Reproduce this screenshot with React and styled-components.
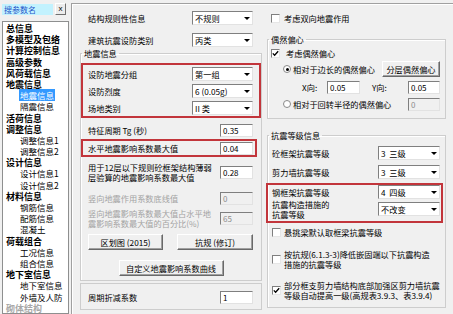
import styled, { createGlobalStyle } from "styled-components";

const GlobalStyle = createGlobalStyle`
  html, body {
    margin: 0;
    padding: 0;
    background: #f0f0f0;
  }
  body {
    font-family: "Noto Sans CJK SC", "Liberation Sans", sans-serif;
    font-size: 8.2px;
    color: #000;
  }
`;

const Window = styled.div`
  display: flex;
  width: 453px;
  height: 314px;
  overflow: hidden;
  background: #f0f0f0;
`;

// ------------------------------------------- 左侧目录

const Sidebar = styled.div`
  width: 67px;
  flex: none;
  padding-left: 2px;
  display: flex;
  flex-direction: column;
`;

const SearchRow = styled.div`
  display: flex;
  align-items: flex-start;
  gap: 2px;
  padding-top: 3px;
  height: 12px;
`;

const SearchBox = styled.div`
  margin-top: 1px;
  width: 51px;
  height: 11px;
  box-sizing: border-box;
  padding-left: 2px;
  background: #c2f2fe;
  color: #1f55c9;
  font-size: 8px;
  line-height: 11px;
  white-space: nowrap;
`;

const CloseButton = styled.div`
  width: 11px;
  height: 12px;
  box-sizing: border-box;
  border: 1px solid;
  border-color: #fff #707070 #707070 #fff;
  background: #ececec;
  font-family: "Liberation Sans", sans-serif;
  font-size: 8px;
  line-height: 9px;
  text-align: center;
`;

const ListBox = styled.div`
  margin-top: 6px;
  flex: 1;
  box-sizing: border-box;
  border: 1px solid #8e8f8f;
  background: #fff;
  padding-top: 1px;
  overflow: hidden;
`;

const TreeItem = styled.div`
  height: 11.2px;
  line-height: 11.2px;
  padding-left: ${(p) => (p.$sub ? 17 : 3)}px;
  font-size: ${(p) => (p.$sub ? 8.5 : 9)}px;
  font-weight: ${(p) => (p.$sub ? 400 : 700)};
  color: ${(p) => (p.$disabled ? "#a8a8a8" : "#000")};
  white-space: nowrap;
`;

const Highlight = styled.span`
  background: ${(p) => (p.$on ? "#3399ff" : "transparent")};
  color: ${(p) => (p.$on ? "#fff" : "inherit")};
  padding: 0 1px;
  margin-left: -1px;
`;

// ------------------------------------------- 右侧参数页

const Panel = styled.div`
  flex: 1;
  margin: 3px 0 0 2px;
  border-top: 1px solid #a0a0a0;
  border-left: 1px solid #a0a0a0;
  box-shadow: inset 1px 1px 0 #fff;
  padding: 5px 0 0 8px;
  display: grid;
  grid-template-columns: 182px 179px;
  column-gap: 5px;
  align-items: start;
`;

const Column = styled.div`
  display: flex;
  flex-direction: column;
`;

const Group = styled.fieldset`
  margin: ${(p) => p.$mt || 0}px 0 0 0;
  padding: 0 0 ${(p) => p.$pb || 0}px 0;
  min-width: 0;
  border: 1px solid #cdcdcd;
  box-shadow: inset 1px 1px 0 #fff;
`;

const Legend = styled.legend`
  padding: 0 2px;
  margin-left: 1px;
  line-height: 10px;
  font-size: 8.2px;
`;

const Box = styled.div`
  margin-top: ${(p) => p.$mt || 0}px;
  border: 1px solid #cdcdcd;
  padding: 4px 0 3px;
`;

const RedBox = styled.div`
  margin: ${(p) => p.$m};
  border: 2px solid #c2353b;
  padding-bottom: ${(p) => p.$pb || 0}px;
`;

const Row = styled.div`
  display: flex;
  align-items: center;
  height: ${(p) => p.$h}px;
  margin-top: ${(p) => p.$mt || 0}px;
  padding: 0 ${(p) => p.$pr || 0}px 0 ${(p) => p.$pl || 0}px;
  gap: ${(p) => p.$gap || 0}px;
  justify-content: ${(p) => (p.$center ? "center" : "flex-start")};
`;

const Label = styled.div`
  line-height: 10px;
  white-space: nowrap;
  color: ${(p) => (p.$disabled ? "#a3a3a3" : "#000")};
  width: ${(p) => (p.$w ? `${p.$w}px` : "auto")};
  flex: none;
`;

const Field = styled.div`
  width: ${(p) => p.$w}px;
  height: 13px;
  box-sizing: border-box;
  margin-left: ${(p) => (p.$fixed ? 0 : "auto")};
  border: 1px solid;
  border-color: #7f7f7f #e2e2e2 #e2e2e2 #7f7f7f;
  background: ${(p) => (p.$disabled ? "#f0f0f0" : "#fff")};
  color: ${(p) => (p.$disabled ? "#8c8c8c" : "#000")};
  padding-left: 2px;
  line-height: 11px;
  font-size: 8px;
  white-space: nowrap;
  flex: none;
`;

const Select = styled.div`
  width: ${(p) => p.$w}px;
  height: 14px;
  box-sizing: border-box;
  margin-left: auto;
  border: 1px solid;
  border-color: #7f7f7f #e2e2e2 #e2e2e2 #7f7f7f;
  background: #fff;
  display: flex;
  align-items: center;
  flex: none;
`;

const SelectText = styled.span`
  flex: 1;
  padding-left: 2px;
  line-height: 12px;
  white-space: pre;
`;

const Arrow = styled.span`
  width: 11px;
  height: 100%;
  display: flex;
  align-items: center;
  justify-content: center;
  &::after {
    content: "";
    border-left: 3px solid transparent;
    border-right: 3px solid transparent;
    border-top: 3px solid #000;
    margin-top: 1px;
  }
`;

const Button = styled.button`
  width: ${(p) => p.$w}px;
  height: 16px;
  box-sizing: border-box;
  margin: 0 0 0 ${(p) => (p.$auto ? "auto" : "0")};
  padding: 0;
  border: 1px solid;
  border-color: #fff #696969 #696969 #fff;
  box-shadow: inset -1px -1px 0 #a0a0a0;
  background: #f0f0f0;
  font: inherit;
  line-height: 10px;
  color: #000;
  flex: none;
`;

const CheckBox = styled.span`
  width: 9px;
  height: 9px;
  box-sizing: border-box;
  border: 1px solid;
  border-color: #7f7f7f #e6e6e6 #e6e6e6 #7f7f7f;
  background: #fff;
  display: flex;
  align-items: center;
  justify-content: center;
  flex: none;
`;

const Radio = styled.span`
  width: 8px;
  height: 8px;
  box-sizing: border-box;
  border: 1px solid #8a8a8a;
  border-radius: 50%;
  background: #fff;
  display: flex;
  align-items: center;
  justify-content: center;
  flex: none;
  &::after {
    content: "";
    width: 3px;
    height: 3px;
    border-radius: 50%;
    background: ${(p) => (p.$on ? "#000" : "transparent")};
  }
`;

function Check({ on }) {
  return (
    <CheckBox>
      {on ? (
        <svg width="7" height="7" viewBox="0 0 7 7">
          <path d="M0.8 3.4 L2.6 5.3 L6.2 1.2" fill="none" stroke="#000" strokeWidth="1.3" />
        </svg>
      ) : null}
    </CheckBox>
  );
}

function Drop({ w, children }) {
  return (
    <Select $w={w}>
      <SelectText>{children}</SelectText>
      <Arrow />
    </Select>
  );
}

const tree = [
  { t: "总信息" },
  { t: "多模型及包络" },
  { t: "计算控制信息" },
  { t: "高级参数" },
  { t: "风荷载信息" },
  { t: "地震信息" },
  { t: "地震信息", sub: true, sel: true },
  { t: "隔震信息", sub: true },
  { t: "活荷信息" },
  { t: "调整信息" },
  { t: "调整信息1", sub: true },
  { t: "调整信息2", sub: true },
  { t: "设计信息" },
  { t: "设计信息1", sub: true },
  { t: "设计信息2", sub: true },
  { t: "材料信息" },
  { t: "钢筋信息", sub: true },
  { t: "配筋信息", sub: true },
  { t: "混凝土", sub: true },
  { t: "荷载组合" },
  { t: "工况信息", sub: true },
  { t: "组合信息", sub: true },
  { t: "地下室信息" },
  { t: "地下室信息", sub: true },
  { t: "外墙及人防", sub: true },
  { t: "砌体结构", dis: true },
];

export default function App() {
  return (
    <>
      <GlobalStyle />
      <Window>
        <Sidebar>
          <SearchRow>
            <SearchBox>搜参数名</SearchBox>
            <CloseButton>x</CloseButton>
          </SearchRow>
          <ListBox>
            {tree.map((item, i) => (
              <TreeItem key={i} $sub={item.sub} $disabled={item.dis}>
                <Highlight $on={item.sel}>{item.t}</Highlight>
              </TreeItem>
            ))}
          </ListBox>
        </Sidebar>

        <Panel>
          <Column>
            <Row $h={18} $pl={8} $pr={9}>
              <Label>结构规则性信息</Label>
              <Drop w={61}>不规则</Drop>
            </Row>
            <Row $h={18} $mt={4} $pl={8} $pr={9}>
              <Label>建筑抗震设防类别</Label>
              <Drop w={61}>丙类</Drop>
            </Row>

            <Group $mt={-1} $pb={4}>
              <Legend>地震信息</Legend>
              <RedBox $m="5px 0 0 0">
                <Row $h={17} $pl={5} $pr={6}>
                  <Label>设防地震分组</Label>
                  <Drop w={61}>第一组</Drop>
                </Row>
                <Row $h={17} $pl={5} $pr={6}>
                  <Label>设防烈度</Label>
                  <Drop w={61}>6 (0.05g)</Drop>
                </Row>
                <Row $h={17} $pl={5} $pr={6}>
                  <Label>场地类别</Label>
                  <Drop w={61}>II 类</Drop>
                </Row>
              </RedBox>
              <Row $h={18} $mt={3} $pl={7} $pr={8}>
                <Label>特征周期 Tg (秒)</Label>
                <Field $w={33}>0.35</Field>
              </Row>
              <RedBox $m="0 4px 0 0">
                <Row $h={14} $pl={5} $pr={2}>
                  <Label>水平地震影响系数最大值</Label>
                  <Field $w={33}>0.04</Field>
                </Row>
              </RedBox>
              <Row $h={24} $mt={3} $pl={7} $pr={8}>
                <Label>
                  用于12层以下规则砼框架结构薄弱
                  <br />
                  层验算的地震影响系数最大值
                </Label>
                <Field $w={33}>0.28</Field>
              </Row>
              <Row $h={18} $mt={5} $pl={7} $pr={8}>
                <Label $disabled>竖向地震作用系数底线值</Label>
                <Field $w={33} $disabled>0</Field>
              </Row>
              <Row $h={22} $pl={7} $pr={8}>
                <Label $disabled>
                  竖向地震影响系数最大值占水平地
                  <br />
                  震影响系数最大值的百分比(%)
                </Label>
                <Field $w={33} $disabled>65</Field>
              </Row>
              <Row $h={16} $mt={5} $pl={7} $gap={14}>
                <Button $w={75}>区划图 (2015)</Button>
                <Button $w={76}>抗规 (修订)</Button>
              </Row>
              <Row $h={16} $mt={10} $center>
                <Button $w={105}>自定义地震影响系数曲线</Button>
              </Row>
            </Group>

            <Box $mt={2}>
              <Row $h={18} $pl={7} $pr={8}>
                <Label>周期折减系数</Label>
                <Field $w={33}>1</Field>
              </Row>
            </Box>
          </Column>

          <Column>
            <Row $h={18} $pl={4} $gap={4}>
              <Check />
              <Label>考虑双向地震作用</Label>
            </Row>

            <Group $mt={7} $pb={6}>
              <Legend>偶然偏心</Legend>
              <Row $h={16} $mt={1} $pl={3} $gap={6}>
                <Check on />
                <Label>考虑偶然偏心</Label>
              </Row>
              <Row $h={16} $pl={15} $pr={5} $gap={2}>
                <Radio $on />
                <Label>相对于边长的偶然偏心</Label>
                <Button $w={58} $auto>分层偶然偏心</Button>
              </Row>
              <Row $h={16} $mt={2} $pl={34} $pr={5}>
                <Label $w={25}>X向:</Label>
                <Field $w={33} $fixed>0.05</Field>
                <Label $w={36} style={{ marginLeft: 12 }}>Y向:</Label>
                <Field $w={32}>0.05</Field>
              </Row>
              <Row $h={16} $mt={1} $pl={15} $pr={5} $gap={2}>
                <Radio />
                <Label>相对于回转半径的偶然偏心</Label>
                <Field $w={32} $disabled>0</Field>
              </Row>
            </Group>

            <Group $mt={11} $pb={6}>
              <Legend>抗震等级信息</Legend>
              <Row $h={16} $mt={5} $pl={4} $pr={5}>
                <Label>砼框架抗震等级</Label>
                <Drop w={62}>{"3  三级"}</Drop>
              </Row>
              <Row $h={16} $mt={3} $pl={4} $pr={5}>
                <Label>剪力墙抗震等级</Label>
                <Drop w={62}>{"3  三级"}</Drop>
              </Row>
              <RedBox $m="3px 2px 0 -2px" $pb={2}>
                <Row $h={14} $pl={4} $pr={1}>
                  <Label>钢框架抗震等级</Label>
                  <Drop w={62}>{"4  四级"}</Drop>
                </Row>
                <Row $h={20} $pl={4} $pr={1}>
                  <Label>
                    抗震构造措施的
                    <br />
                    抗震等级
                  </Label>
                  <Drop w={62}>不改变</Drop>
                </Row>
              </RedBox>
              <Row $h={16} $mt={1} $pl={4} $gap={3}>
                <Check />
                <Label>悬挑梁默认取框梁抗震等级</Label>
              </Row>
              <Row $h={22} $mt={8} $pl={4} $gap={3}>
                <Check />
                <Label>
                  按抗规(6.1.3-3)降低嵌固端以下抗震构造
                  <br />
                  措施的抗震等级
                </Label>
              </Row>
              <Row $h={22} $mt={9} $pl={4} $gap={3}>
                <Check on />
                <Label>
                  部分框支剪力墙结构底部加强区剪力墙抗震
                  <br />
                  等级自动提高一级(高规表3.9.3、表3.9.4)
                </Label>
              </Row>
            </Group>
          </Column>
        </Panel>
      </Window>
    </>
  );
}
